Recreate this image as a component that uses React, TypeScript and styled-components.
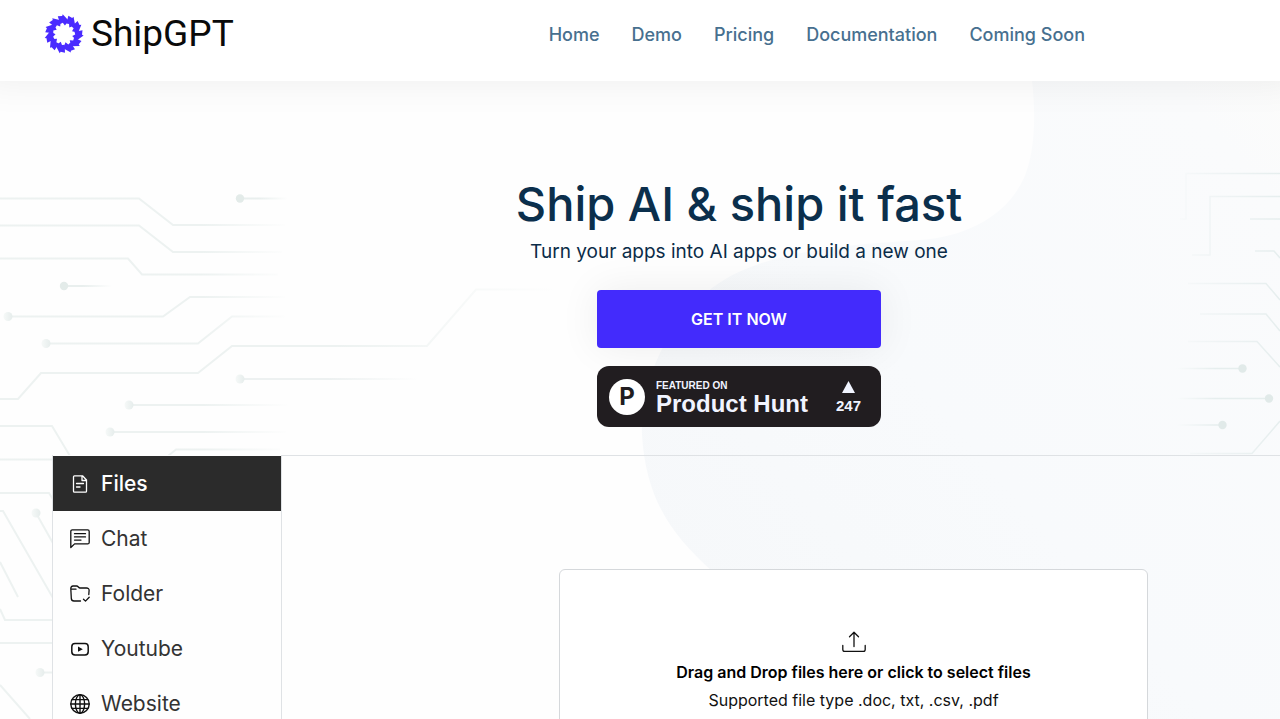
import React, { useState } from "react";
import styled, { createGlobalStyle } from "styled-components";

const GlobalStyle = createGlobalStyle`
  *, *::before, *::after { box-sizing: border-box; }
  body {
    margin: 0;
    background: #fefefe;
    font-family: Inter, "Open Sans", sans-serif;
    color: #0b2c48;
  }
`;

const Page = styled.div`
  position: relative;
  min-height: 100vh;
  overflow: hidden;
`;

const Header = styled.header`
  position: relative;
  display: flex;
  align-items: flex-start;
  justify-content: space-between;
  height: 81px;
  padding: 12px 195px 0 44px;
  background: #fff;
  box-shadow: 0 -20px 40px 20px rgba(0, 0, 0, 0.07);
`;

const Logo = styled.a`
  display: flex;
  align-items: center;
  gap: 7px;
  height: 44px;
  font-family: Roboto, sans-serif;
  font-size: 37px;
  line-height: 46px;
  color: #0a0a0a;
  text-decoration: none;
`;

const Nav = styled.nav`
  display: flex;
  gap: 32px;
`;

const NavLink = styled.a`
  font-size: 18px;
  font-weight: 500;
  line-height: 46px;
  color: #47708f;
  text-decoration: none;
`;

const Art = styled.svg<{ $side: "left" | "right" }>`
  position: absolute;
  top: 0;
  ${(p) => p.$side}: 0;
  pointer-events: none;
`;

const Hero = styled.section`
  position: relative;
  display: flex;
  flex-direction: column;
  align-items: center;
  padding: 97px 0 28px 198px;
`;

const Title = styled.h1`
  margin: 0;
  font-size: 47px;
  font-weight: 500;
  line-height: 52px;
  color: #0b2f4c;
`;

const Subtitle = styled.p`
  margin: 8px 0 24px;
  font-size: 19px;
  line-height: 28px;
`;

const BuyButton = styled.button`
  width: 284px;
  height: 58px;
  border: 0;
  border-radius: 4px;
  background: #432bfc;
  box-shadow: 0 0 40px rgba(0, 0, 0, 0.07);
  font: 600 16px/24px Inter, sans-serif;
  color: #fff;
`;

const HuntBadge = styled.a`
  display: flex;
  align-items: center;
  width: 284px;
  height: 61px;
  margin-top: 18px;
  padding: 0 20px 0 12px;
  border-radius: 12px;
  background: #211d20;
  font-family: "Liberation Sans", Arial, sans-serif;
  font-weight: 700;
  color: #f1f4ff;
  text-decoration: none;
`;

const HuntMark = styled.span`
  width: 36px;
  height: 36px;
  border-radius: 50%;
  background: #fff;
  font: 700 24px/36px Inter, sans-serif;
  text-align: center;
  color: #211d20;
`;

const HuntText = styled.span`
  display: flex;
  flex: 1;
  flex-direction: column;
  padding: 2px 0 0 11px;
`;

const HuntSmall = styled.span`
  font-size: 10px;
  line-height: 12px;
`;

const HuntName = styled.span`
  font-size: 24px;
  line-height: 24px;
`;

const HuntVotes = styled.span`
  display: flex;
  flex-direction: column;
  align-items: center;
  gap: 5px;
  padding-top: 2px;
  font-size: 15px;
  line-height: 16px;
`;

const Workspace = styled.section`
  position: relative;
  display: flex;
  padding-left: 52px;
`;

const Tabs = styled.nav`
  width: 230px;
  flex: none;
  padding-top: 1px;
  border: solid #dfe2e5;
  border-width: 0 1px;
  background: #fefefe;
`;

const Tab = styled.button<{ $active: boolean }>`
  display: flex;
  align-items: center;
  gap: 11px;
  width: 100%;
  height: 55px;
  padding: 0 17px;
  border: 0;
  background: ${(p) => (p.$active ? "#2b2b2b" : "transparent")};
  font: ${(p) => (p.$active ? 500 : 400)} 21px/30px Inter, sans-serif;
  color: ${(p) => (p.$active ? "#fff" : "#333")};

  svg { color: ${(p) => (p.$active ? "#fff" : "#111")}; }
`;

const Pane = styled.div`
  flex: 1;
  padding: 113px 132px 40px 277px;
  border-top: 1px solid #dfe2e5;
`;

const DropZone = styled.label`
  display: flex;
  flex-direction: column;
  align-items: center;
  height: 220px;
  padding-top: 60px;
  border: 1px solid #d5d8db;
  border-radius: 6px;
  background: #fff;
  font-size: 16px;
  line-height: 28px;
  color: #111;
  cursor: pointer;
`;

const FileInput = styled.input`
  position: absolute;
  width: 1px;
  height: 1px;
  opacity: 0;
`;

const DropTitle = styled.strong`
  margin-top: 4px;
  font-weight: 600;
  color: #000;
`;

const LogoMark = () => (
  <svg width="40" height="40" viewBox="-20 -20 40 40" fill="#4a2bff" aria-hidden="true">
    {Array.from({ length: 11 }, (_, i) => (
      <path
        key={i}
        transform={`rotate(${(i * 360) / 11 - 2})`}
        d="M5.200-13.200-.6-19.700-1.200-18-5.600-18-3.400-10.200-.8-11.200 1.200-8.400z"
      />
    ))}
  </svg>
);

const line = { fill: "none", stroke: "currentColor", strokeLinecap: "round", strokeLinejoin: "round" } as const;

const FileIcon = () => (
  <svg width="20" height="20" viewBox="0 0 20 20" strokeWidth="1.300" {...line}>
    <path d="M3.500 2.800c0-.6.400-1 1-1h8l4 4.200v11.200c0 .6-.4 1-1 1h-11c-.6 0-1-.4-1-1zM12 2v4.500h4.300M6.500 9.500h7M6.500 13h3.500" />
  </svg>
);

const ChatIcon = () => (
  <svg width="20" height="20" viewBox="0 0 20 20" strokeWidth="1.300" {...line}>
    <path d="M.8 18.500V2.400c0-.9.600-1.500 1.500-1.500h15.400c.9 0 1.500.6 1.500 1.500v11c0 .9-.6 1.500-1.500 1.500H4.600zM4.500 4.700h11M4.500 7.900h11M4.500 11.100h6.500" />
  </svg>
);

const FolderIcon = () => (
  <svg width="20" height="20" viewBox="0 0 20 20" strokeWidth="1.300" {...line}>
    <path d="M10.500 17H4c-1.800 0-2.600-.9-2.700-2.600L.8 4.500C.8 2.900 1.600 2 3 2h3.700c1.500 0 1.800 2 3.300 2h6.500c1.700 0 2.700.9 2.600 2.500l-.3 4M1 5.200h5M13.500 15.200l2 1.900 3.700-3.800" />
  </svg>
);

const VideoIcon = () => (
  <svg width="20" height="20" viewBox="0 0 20 20" strokeWidth="1.500" {...line}>
    <rect x="1.800" y="4.500" width="16.400" height="11.400" rx="3.200" />
    <path d="M8 7.600v5.200l4.800-2.600z" fill="currentColor" stroke="none" />
  </svg>
);

const GlobeIcon = () => (
  <svg width="20" height="20" viewBox="0 0 20 20" strokeWidth="1.400" {...line}>
    <circle cx="10" cy="10" r="9.200" />
    <ellipse cx="10" cy="10" rx="4.600" ry="9.200" />
    <path d="M10 .8v18.400M.8 10h18.400M2.200 5.600h15.600M2.200 14.400h15.600" />
  </svg>
);

const UploadIcon = () => (
  <svg width="24" height="24" viewBox="0 0 24 24" strokeWidth="1.300" {...line}>
    <path d="M12 16.500V2.500M7.500 6.700 12 2.200l4.500 4.500M.8 15.500v4c0 1.200.7 1.900 1.900 1.900h18.600c1.200 0 1.900-.7 1.900-1.900v-4" />
  </svg>
);

const traceGroups = [
  {
    stroke: "url(#traceL)",
    paths: [
      "M0 198.500H139L173 225H285",
      "M0 225.500H139L173 252H282",
      "M0 258.500H128L142 274.500H278",
      "M8 316.500H163L190 297H285",
      "M46 343.500H198L232 316.500H285",
      "M129 405H288",
      "M110 432H286",
      "M168 456 176 449.500H280",
    ],
  },
  { stroke: "url(#traceStub)", paths: ["M64 286H112"] },
  { stroke: "url(#traceTop)", paths: ["M240 198.500H288"] },
  { stroke: "url(#traceMid)", paths: ["M240 379H418"] },
  {
    stroke: "url(#traceLong)",
    paths: [
      "M0 399H18L41 373H198L232 346H427L476 289.500H560",
      "M0 426H52L70 456",
      "M0 459.500H53",
      "M0 493H49L54 501",
      "M0 511H3L53 598",
      "M0 562 18 597",
      "M36 513 54 545",
      "M0 609 5 620H53",
      "M0 643H53",
      "M40 672.500H53",
      "M0 685 30 719",
    ],
  },
];

const fades = [
  { id: "traceL", from: 0, hold: 0.7, to: 290, color: "#edf2f1" },
  { id: "traceStub", from: 64, hold: 0.4, to: 112, color: "#e9efee" },
  { id: "traceTop", from: 240, hold: 0.4, to: 288, color: "#e9efee" },
  { id: "traceMid", from: 240, hold: 0.5, to: 418, color: "#edf1f1" },
  { id: "traceLong", from: 0, hold: 0.6, to: 560, color: "#edf2f1" },
];

const softDots = [[8, 316.5], [46, 343.5], [240, 379], [129, 405], [110, 432], [36, 513], [40, 672.5]];

const LeftArt = () => (
  <Art $side="left" width="600" height="719" viewBox="0 0 600 719" aria-hidden="true">
    <defs>
      {fades.map((f) => (
        <linearGradient key={f.id} id={f.id} gradientUnits="userSpaceOnUse" x1={f.from} y1="0" x2={f.to} y2="0">
          <stop offset="0" stopColor={f.color} />
          <stop offset={f.hold} stopColor={f.color} />
          <stop offset="1" stopColor="#fefefe" />
        </linearGradient>
      ))}
      <linearGradient id="dotFade">
        <stop offset="0" stopColor="#f6f9f8" />
        <stop offset="1" stopColor="#e6edec" />
      </linearGradient>
    </defs>
    <g fill="none" strokeWidth="2">
      {traceGroups.map((group) => (
        <path key={group.stroke} d={group.paths.join("")} stroke={group.stroke} />
      ))}
    </g>
    <g fill="#e3ebe9">
      <circle cx="240" cy="198.500" r="4.200" />
      <circle cx="64" cy="286" r="4.200" />
    </g>
    <g fill="url(#dotFade)">
      {softDots.map(([x, y]) => (
        <circle key={`${x}-${y}`} cx={x} cy={y} r="4.500" />
      ))}
    </g>
  </Art>
);

const RightArt = () => (
  <Art $side="right" width="660" height="800" viewBox="620 0 660 800" aria-hidden="true">
    <defs>
      <linearGradient id="blob" x1="0" y1="1" x2="1" y2="0">
        <stop offset="0" stopColor="#f5f7f9" />
        <stop offset=".5" stopColor="#f8fafc" />
        <stop offset=".9" stopColor="#fafbfc" />
        <stop offset="1" stopColor="#fcfcfb" />
      </linearGradient>
      <linearGradient id="traceR" gradientUnits="userSpaceOnUse" x1="1176" y1="0" x2="1280" y2="0">
        <stop offset="0" stopColor="#f8fafb" />
        <stop offset=".3" stopColor="#f1f5f6" />
        <stop offset="1" stopColor="#e6eeee" />
      </linearGradient>
      <linearGradient id="traceDot" gradientUnits="userSpaceOnUse" x1="1176" y1="0" x2="1215" y2="0">
        <stop offset="0" stopColor="#f9fbfc" />
        <stop offset="1" stopColor="#e6eeee" />
      </linearGradient>
    </defs>
    <path
      fill="url(#blob)"
      d="M1029 60C1037 105 1036 150 1024 178 1006 216 968 236 920 240 840 245 760 252 712 288 668 322 640 380 642 435 646 500 672 535 712 571 780 630 860 680 900 800H1280V60z"
    />
    <g fill="none" stroke="url(#traceR)" strokeWidth="1.500">
      <path d="M1180 219H1186V173.500H1280" />
      <path d="M1192 255H1210V196.500H1280" />
      <path d="M1250 219H1280M1255 251H1274L1280 258" />
      <path d="M1188 283.500H1266L1280 300M1200 314H1266L1280 331M1188 341.500H1257L1280 367" />
      <path d="M1190 453.500H1252L1280 421" />
      <path stroke="url(#traceDot)" d="M1176 368.500H1242M1176 398.500H1268M1176 425H1222" />
    </g>
    <g fill="#e1eae9">
      <circle cx="1242.500" cy="368.500" r="4.200" />
      <circle cx="1269" cy="398.500" r="4.200" />
      <circle cx="1222.500" cy="425" r="4.200" />
    </g>
  </Art>
);

const navItems = ["Home", "Demo", "Pricing", "Documentation", "Coming Soon"];

const tabItems = [
  { name: "Files", Icon: FileIcon },
  { name: "Chat", Icon: ChatIcon },
  { name: "Folder", Icon: FolderIcon },
  { name: "Youtube", Icon: VideoIcon },
  { name: "Website", Icon: GlobeIcon },
];

export default function App() {
  const [active, setActive] = useState("Files");
  return (
    <Page>
      <GlobalStyle />
      <LeftArt />
      <RightArt />
      <Header>
        <Logo href="#home">
          <LogoMark />
          ShipGPT
        </Logo>
        <Nav aria-label="Main">
          {navItems.map((item) => (
            <NavLink key={item} href={`#${item.toLowerCase().replace(" ", "-")}`}>
              {item}
            </NavLink>
          ))}
        </Nav>
      </Header>
      <Hero>
        <Title>Ship AI &amp; ship it fast</Title>
        <Subtitle>Turn your apps into AI apps or build a new one</Subtitle>
        <BuyButton type="button">GET IT NOW</BuyButton>
        <HuntBadge href="#product-hunt">
          <HuntMark>P</HuntMark>
          <HuntText>
            <HuntSmall>FEATURED ON</HuntSmall>
            <HuntName>Product Hunt</HuntName>
          </HuntText>
          <HuntVotes>
            <svg width="13" height="12" viewBox="0 0 13 12" fill="currentColor" aria-hidden="true">
              <path d="M6.500 0 13 12H0z" />
            </svg>
            247
          </HuntVotes>
        </HuntBadge>
      </Hero>
      <Workspace>
        <Tabs aria-label="Sources">
          {tabItems.map(({ name, Icon }) => (
            <Tab key={name} type="button" $active={name === active} onClick={() => setActive(name)}>
              <Icon />
              {name}
            </Tab>
          ))}
        </Tabs>
        <Pane>
          <DropZone>
            <FileInput type="file" multiple accept=".doc,.txt,.csv,.pdf" />
            <UploadIcon />
            <DropTitle>Drag and Drop files here or click to select files</DropTitle>
            <span>Supported file type .doc, txt, .csv, .pdf</span>
          </DropZone>
        </Pane>
      </Workspace>
    </Page>
  );
}
